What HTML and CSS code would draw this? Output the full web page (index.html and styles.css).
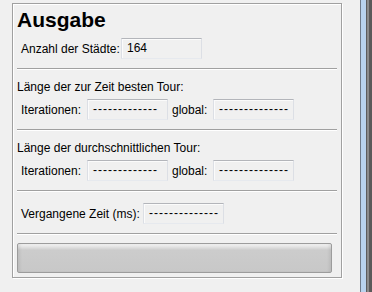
FILE: index.html
```html
<!DOCTYPE html>
<html>
<head>
<meta charset="utf-8">
<link rel="stylesheet" href="styles.css">
</head>
<body>
<div class="window">
  <div class="main">
    <div class="panel">
      <div class="title">Ausgabe</div>
      <div class="row row-first">
        <span class="lbl lbl-count">Anzahl der Städte:</span>
        <span class="field">164</span>
      </div>
      <div class="sep"></div>
      <div class="heading">Länge der zur Zeit besten Tour:</div>
      <div class="row row-after-heading">
        <span class="lbl lbl-iter">Iterationen:</span>
        <span class="field dashes">-------------</span>
        <span class="lbl lbl-global">global:</span>
        <span class="field dashes">--------------</span>
      </div>
      <div class="sep"></div>
      <div class="heading">Länge der durchschnittlichen Tour:</div>
      <div class="row row-after-heading">
        <span class="lbl lbl-iter">Iterationen:</span>
        <span class="field dashes">-------------</span>
        <span class="lbl lbl-global">global:</span>
        <span class="field dashes">--------------</span>
      </div>
      <div class="sep"></div>
      <div class="row row-time">
        <span class="lbl lbl-time">Vergangene Zeit (ms):</span>
        <span class="field dashes">--------------</span>
      </div>
      <div class="sep"></div>
      <div class="progress"></div>
    </div>
  </div>
  <div class="edge"></div>
</div>
</body>
</html>
```

FILE: styles.css
```css
html, body {
  margin: 0;
  padding: 0;
  background: #f0f0f0;
}

body {
  font-family: "Liberation Sans", Arial, sans-serif;
  font-size: 12px;
  color: #000;
}

.window {
  display: flex;
  width: 372px;
  height: 292px;
}

.main {
  width: 360px;
  padding: 3px 0 0 12px;
  box-sizing: border-box;
}

.edge {
  width: 12px;
  height: 292px;
  background: linear-gradient(to right,
    #6f7b8a 0 1px,
    #b9d3ee 1px 6px,
    #5d5d5d 6px 7px,
    #8c8c8c 7px 9px,
    #5a5a5a 9px 12px);
}

.panel {
  width: 330px;
  height: 275px;
  box-sizing: border-box;
  border: 1px solid #a0a0a0;
  box-shadow: inset 1px 1px 0 #fff, 1px 1px 0 #fff;
  padding: 0 3px 0 4px;
  display: flex;
  flex-direction: column;
}

.title {
  margin-top: 4px;
  font-weight: bold;
  font-size: 21px;
  line-height: 24px;
  height: 24px;
}

.row {
  display: flex;
  align-items: center;
  height: 21px;
  padding-left: 4px;
  line-height: 14px;
}

.row-first { margin-top: 6px; }
.row-after-heading { margin-top: 5px; }
.row-time { margin-top: 11px; }

.lbl {
  white-space: nowrap;
}

.lbl-count { width: 100px; }
.lbl-iter { width: 66px; }
.lbl-global { width: 41px; margin-left: 4px; }
.lbl-time { width: 122px; }

.field {
  box-sizing: border-box;
  width: 81px;
  height: 21px;
  padding-left: 5px;
  line-height: 19px;
  border: 1px solid #dcdfe5;
  border-top-color: #b3b5ba;
  border-bottom-color: #e6e9ee;
  background: #f0f0f0;
  box-shadow: inset 1px 1px 0 #fbfbfb;
  white-space: nowrap;
}

.dashes {
  letter-spacing: 1px;
}

.sep {
  height: 1px;
  width: 320px;
  background: #a0a0a0;
  border-bottom: 1px solid #fff;
  margin-top: 9px;
}

.heading {
  margin-top: 10px;
  line-height: 14px;
  height: 14px;
  white-space: nowrap;
}

.progress {
  margin-top: 8px;
  width: 315px;
  height: 30px;
  box-sizing: border-box;
  border: 1px solid #9c9c9c;
  border-radius: 2px;
  background: linear-gradient(#f2f2f2, #e2e2e2 3px, #cccccc 6px, #c8c8c8 100%);
  box-shadow: inset 3px 0 3px -1px rgba(0,0,0,0.07), inset -3px 0 3px -1px rgba(0,0,0,0.07);
}
```
